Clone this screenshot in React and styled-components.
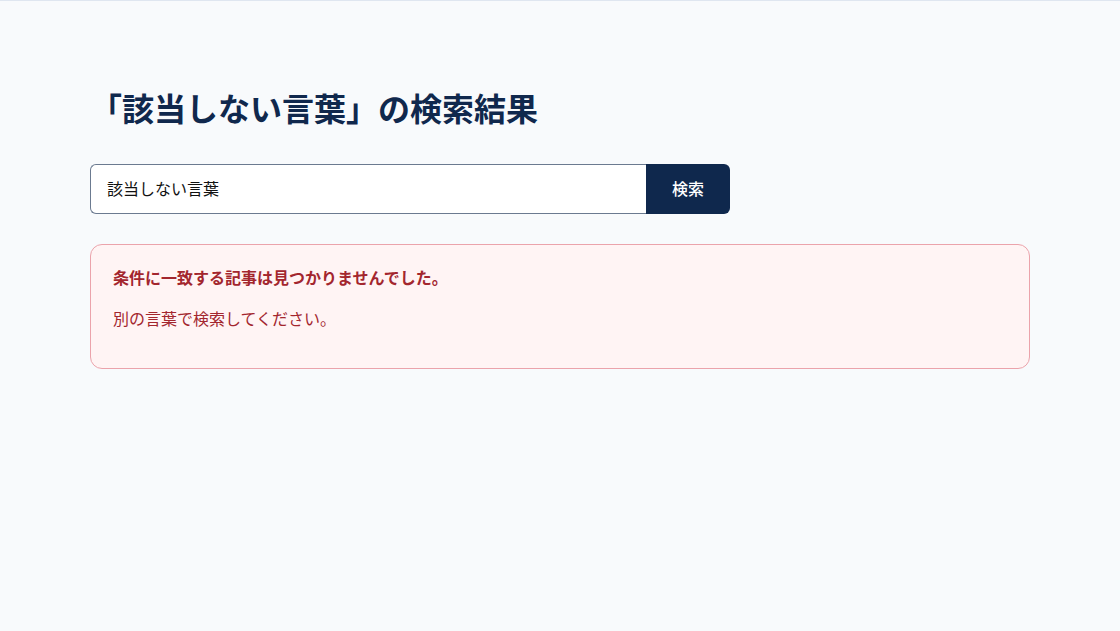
import React from "react";
import styled, { createGlobalStyle } from "styled-components";

const Global = createGlobalStyle`
  html, body { margin: 0; padding: 0; }
  body {
    background: #f8fafc;
    font-family: "Noto Sans CJK JP", "Noto Sans", sans-serif;
    border-top: 1px solid #dfe6f0;
  }
  * { box-sizing: border-box; }
`;

const Main = styled.main`
  max-width: 940px;
  margin: 0 auto;
  padding: 86px 0 0;
`;

const Title = styled.h1`
  margin: 0 0 37px;
  font-size: 32px;
  line-height: 40px;
  font-weight: 700;
  color: #10284d;
  letter-spacing: 0;
`;

const Form = styled.form`
  display: flex;
  width: 640px;
  height: 50px;
  margin-bottom: 30px;
`;

const Input = styled.input`
  flex: 1;
  min-width: 0;
  height: 100%;
  padding: 0 16px 3px;
  border: 1px solid #6b7a90;
  border-right: none;
  border-radius: 6px 0 0 6px;
  background: #fff;
  font-family: inherit;
  font-size: 16px;
  color: #111;
  outline: none;
`;

const Button = styled.button`
  width: 84px;
  height: 100%;
  padding: 0 0 3px;
  border: none;
  border-radius: 0 6px 6px 0;
  background: #0f284d;
  color: #fff;
  font-family: inherit;
  font-size: 16px;
  font-weight: 500;
  cursor: pointer;
`;

const Alert = styled.section`
  border: 1px solid #eba3ab;
  background: #fff4f4;
  border-radius: 12px;
  padding: 20px 22px 22px;
  color: #a3262e;
`;

const AlertTitle = styled.p`
  margin: 0 0 17px;
  font-size: 16px;
  line-height: 24px;
  font-weight: 700;
`;

const AlertText = styled.p`
  margin: 0 0 16px;
  font-size: 16px;
  line-height: 24px;
  font-weight: 400;
`;

export default function App() {
  return (
    <>
      <Global />
      <Main>
        <Title>「該当しない言葉」の検索結果</Title>
        <Form onSubmit={(e) => e.preventDefault()}>
          <Input defaultValue="該当しない言葉" />
          <Button type="submit">検索</Button>
        </Form>
        <Alert>
          <AlertTitle>条件に一致する記事は見つかりませんでした。</AlertTitle>
          <AlertText>別の言葉で検索してください。</AlertText>
        </Alert>
      </Main>
    </>
  );
}
